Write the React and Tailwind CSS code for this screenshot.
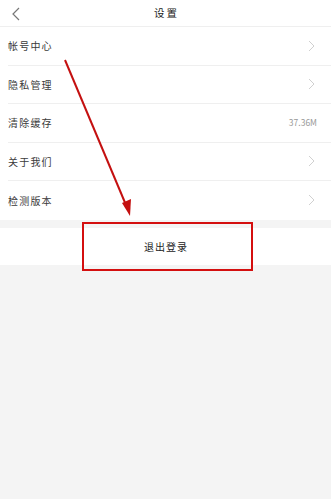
import React from "react";

const Chevron = () => (
  <svg width="7" height="12" viewBox="0 0 7 12" fill="none">
    <path d="M1 1l5 5-5 5" stroke="#d0d0d0" strokeWidth="1" />
  </svg>
);

const Row = ({ label, right, last }) => (
  <div className="pl-2 bg-white">
    <div className={`h-[38.5px] flex items-center justify-between pr-[16px] ${last ? "" : "border-b border-[#efefef]"}`}>
      <span className="text-[10px] text-[#3a3a3a] tracking-[1.2px]">{label}</span>
      {right}
    </div>
  </div>
);

export default function App() {
  return (
    <div
      className="relative w-[331px] h-[499px] bg-[#f4f4f4] overflow-hidden"
      style={{ fontFamily: '"Noto Sans CJK SC", "Noto Sans", sans-serif' }}
    >
      <div className="h-[27px] bg-white border-b border-[#efefef] flex items-center relative">
        <svg className="absolute left-[12px] top-[7px]" width="8" height="14" viewBox="0 0 8 14" fill="none">
          <path d="M7 1L1 7l6 6" stroke="#777" strokeWidth="1.2" />
        </svg>
        <span className="mx-auto text-[10.5px] text-[#222] tracking-[2px] pl-[2px]">设置</span>
      </div>
      <Row label="帐号中心" right={<Chevron />} />
      <Row label="隐私管理" right={<Chevron />} />
      <Row label="清除缓存" right={<span className="text-[8.5px] text-[#999] -mr-[2px]">37.36M</span>} />
      <Row label="关于我们" right={<Chevron />} />
      <Row label="检测版本" right={<Chevron />} last />
      <div className="h-[8px]" />
      <div className="h-[37px] bg-white flex items-center justify-center">
        <span className="text-[10px] text-[#222] tracking-[1px] pl-[1px]">退出登录</span>
      </div>

      <div className="absolute left-[82px] top-[222px] w-[171px] h-[49px] border-[2.5px] border-[#d40f0f]" />
      <svg className="absolute left-0 top-0" width="331" height="499">
        <line x1="65" y1="60" x2="126" y2="205" stroke="#c41010" strokeWidth="2" />
        <polygon points="130,216 122,203 131,199" fill="#c41010" />
      </svg>
    </div>
  );
}
